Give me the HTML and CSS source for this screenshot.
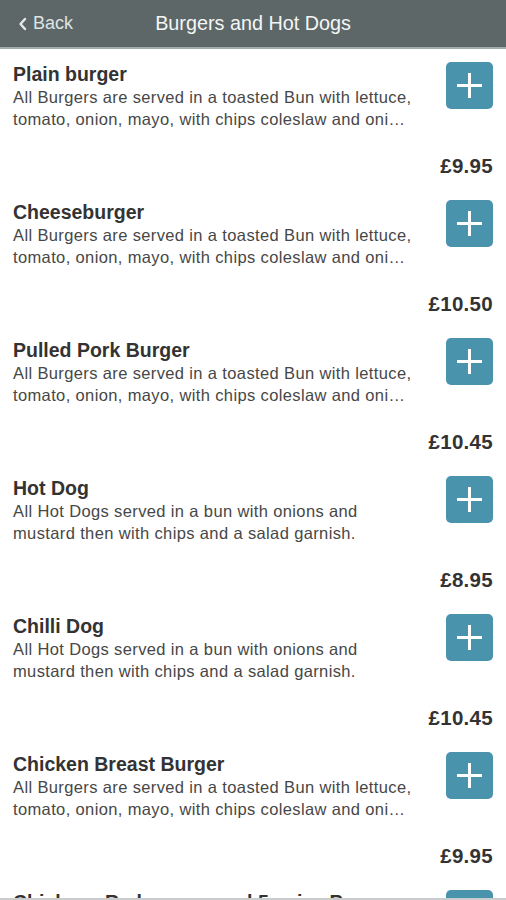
FILE: index.html
```html
<!DOCTYPE html>
<html lang="en">
<head>
    <meta charset="UTF-8">
    <meta name="viewport" content="width=device-width, initial-scale=1.0">
    <title>Burgers and Hot Dogs</title>
    <link rel="stylesheet" href="styles.css">
</head>
<body>
    <div class="header">
        <a class="back" href="#">
            <svg width="9" height="14" viewBox="0 0 9 14"><path d="M7 2 L2.5 7 L7 12" fill="none" stroke="#e6e9e9" stroke-width="2.4" stroke-linecap="round" stroke-linejoin="round"/></svg>
            Back
        </a>
        <h1>Burgers and Hot Dogs</h1>
    </div>

    <div class="menu-list">
        <div class="item">
            <div class="item-top">
                <div class="item-text">
                    <p class="item-name">Plain burger</p>
                    <p class="item-desc">All Burgers are served in a toasted Bun with lettuce, tomato, onion, mayo, with chips coleslaw and oni…</p>
                </div>
                <button class="add-btn"><span class="plus"></span></button>
            </div>
            <p class="price">£9.95</p>
        </div>
        <div class="item">
            <div class="item-top">
                <div class="item-text">
                    <p class="item-name">Cheeseburger</p>
                    <p class="item-desc">All Burgers are served in a toasted Bun with lettuce, tomato, onion, mayo, with chips coleslaw and oni…</p>
                </div>
                <button class="add-btn"><span class="plus"></span></button>
            </div>
            <p class="price">£10.50</p>
        </div>
        <div class="item">
            <div class="item-top">
                <div class="item-text">
                    <p class="item-name">Pulled Pork Burger</p>
                    <p class="item-desc">All Burgers are served in a toasted Bun with lettuce, tomato, onion, mayo, with chips coleslaw and oni…</p>
                </div>
                <button class="add-btn"><span class="plus"></span></button>
            </div>
            <p class="price">£10.45</p>
        </div>
        <div class="item">
            <div class="item-top">
                <div class="item-text">
                    <p class="item-name">Hot Dog</p>
                    <p class="item-desc">All Hot Dogs served in a bun with onions and mustard then with chips and a salad garnish.</p>
                </div>
                <button class="add-btn"><span class="plus"></span></button>
            </div>
            <p class="price">£8.95</p>
        </div>
        <div class="item">
            <div class="item-top">
                <div class="item-text">
                    <p class="item-name">Chilli Dog</p>
                    <p class="item-desc">All Hot Dogs served in a bun with onions and mustard then with chips and a salad garnish.</p>
                </div>
                <button class="add-btn"><span class="plus"></span></button>
            </div>
            <p class="price">£10.45</p>
        </div>
        <div class="item">
            <div class="item-top">
                <div class="item-text">
                    <p class="item-name">Chicken Breast Burger</p>
                    <p class="item-desc">All Burgers are served in a toasted Bun with lettuce, tomato, onion, mayo, with chips coleslaw and oni…</p>
                </div>
                <button class="add-btn"><span class="plus"></span></button>
            </div>
            <p class="price">£9.95</p>
        </div>
        <div class="item">
            <div class="item-top">
                <div class="item-text">
                    <p class="item-name">Chickpea Red pepper and 5 spice Burger</p>
                    <p class="item-desc">All Burgers are served in a toasted Bun with lettuce, tomato, onion, mayo, with chips coleslaw and oni…</p>
                </div>
                <button class="add-btn"><span class="plus"></span></button>
            </div>
            <p class="price">£9.95</p>
        </div>
    </div>

    <div class="bottom-edge"></div>
</body>
</html>
```

FILE: styles.css
```css
body {
    font-family: "Liberation Sans", Arial, sans-serif;
    background-color: #fff;
    color: #333;
    margin: 0;
    padding: 0;
}
.header {
    display: flex;
    align-items: center;
    justify-content: center;
    position: relative;
    height: 47px;
    background-color: #5d6768;
    border-bottom: 2px solid #a4acad;
}
.header h1 {
    margin: 0;
    font-size: 19.8px;
    font-weight: normal;
    color: #f4f6f6;
}
.back {
    position: absolute;
    left: 18px;
    top: 13px;
    display: flex;
    align-items: center;
    gap: 6px;
    color: #dfe3e3;
    font-size: 18px;
    text-decoration: none;
}
.menu-list {
    display: flex;
    flex-direction: column;
}
.item {
    padding: 13px 13px 9px 13px;
}
.item-top {
    display: flex;
    justify-content: space-between;
    align-items: flex-start;
}
.item-text {
    width: 402px;
}
.item-name {
    margin: 0;
    font-size: 19.5px;
    font-weight: bold;
    line-height: 24px;
    color: #333;
    white-space: nowrap;
}
.item-desc {
    margin: 0;
    font-size: 16.5px;
    letter-spacing: 0.37px;
    line-height: 22px;
    color: #474747;
}
.add-btn {
    width: 47px;
    height: 47px;
    border: none;
    border-radius: 5px;
    background-color: #4a93ad;
    padding: 0;
    display: flex;
    align-items: center;
    justify-content: center;
    cursor: pointer;
    flex-shrink: 0;
}
.plus {
    position: relative;
    width: 25px;
    height: 25px;
}
.plus::before,
.plus::after {
    content: "";
    position: absolute;
    background: #fff;
}
.plus::before {
    left: 0;
    top: 11px;
    width: 25px;
    height: 3px;
}
.plus::after {
    left: 11px;
    top: 0;
    width: 3px;
    height: 25px;
}
.price {
    margin: 24px 0 0 0;
    text-align: right;
    font-size: 20.5px;
    letter-spacing: 0.3px;
    font-weight: bold;
    line-height: 24px;
    color: #333;
}
.bottom-edge {
    position: fixed;
    left: 0;
    right: 0;
    bottom: 0;
    height: 2px;
    background: #c9cdce;
}
```
